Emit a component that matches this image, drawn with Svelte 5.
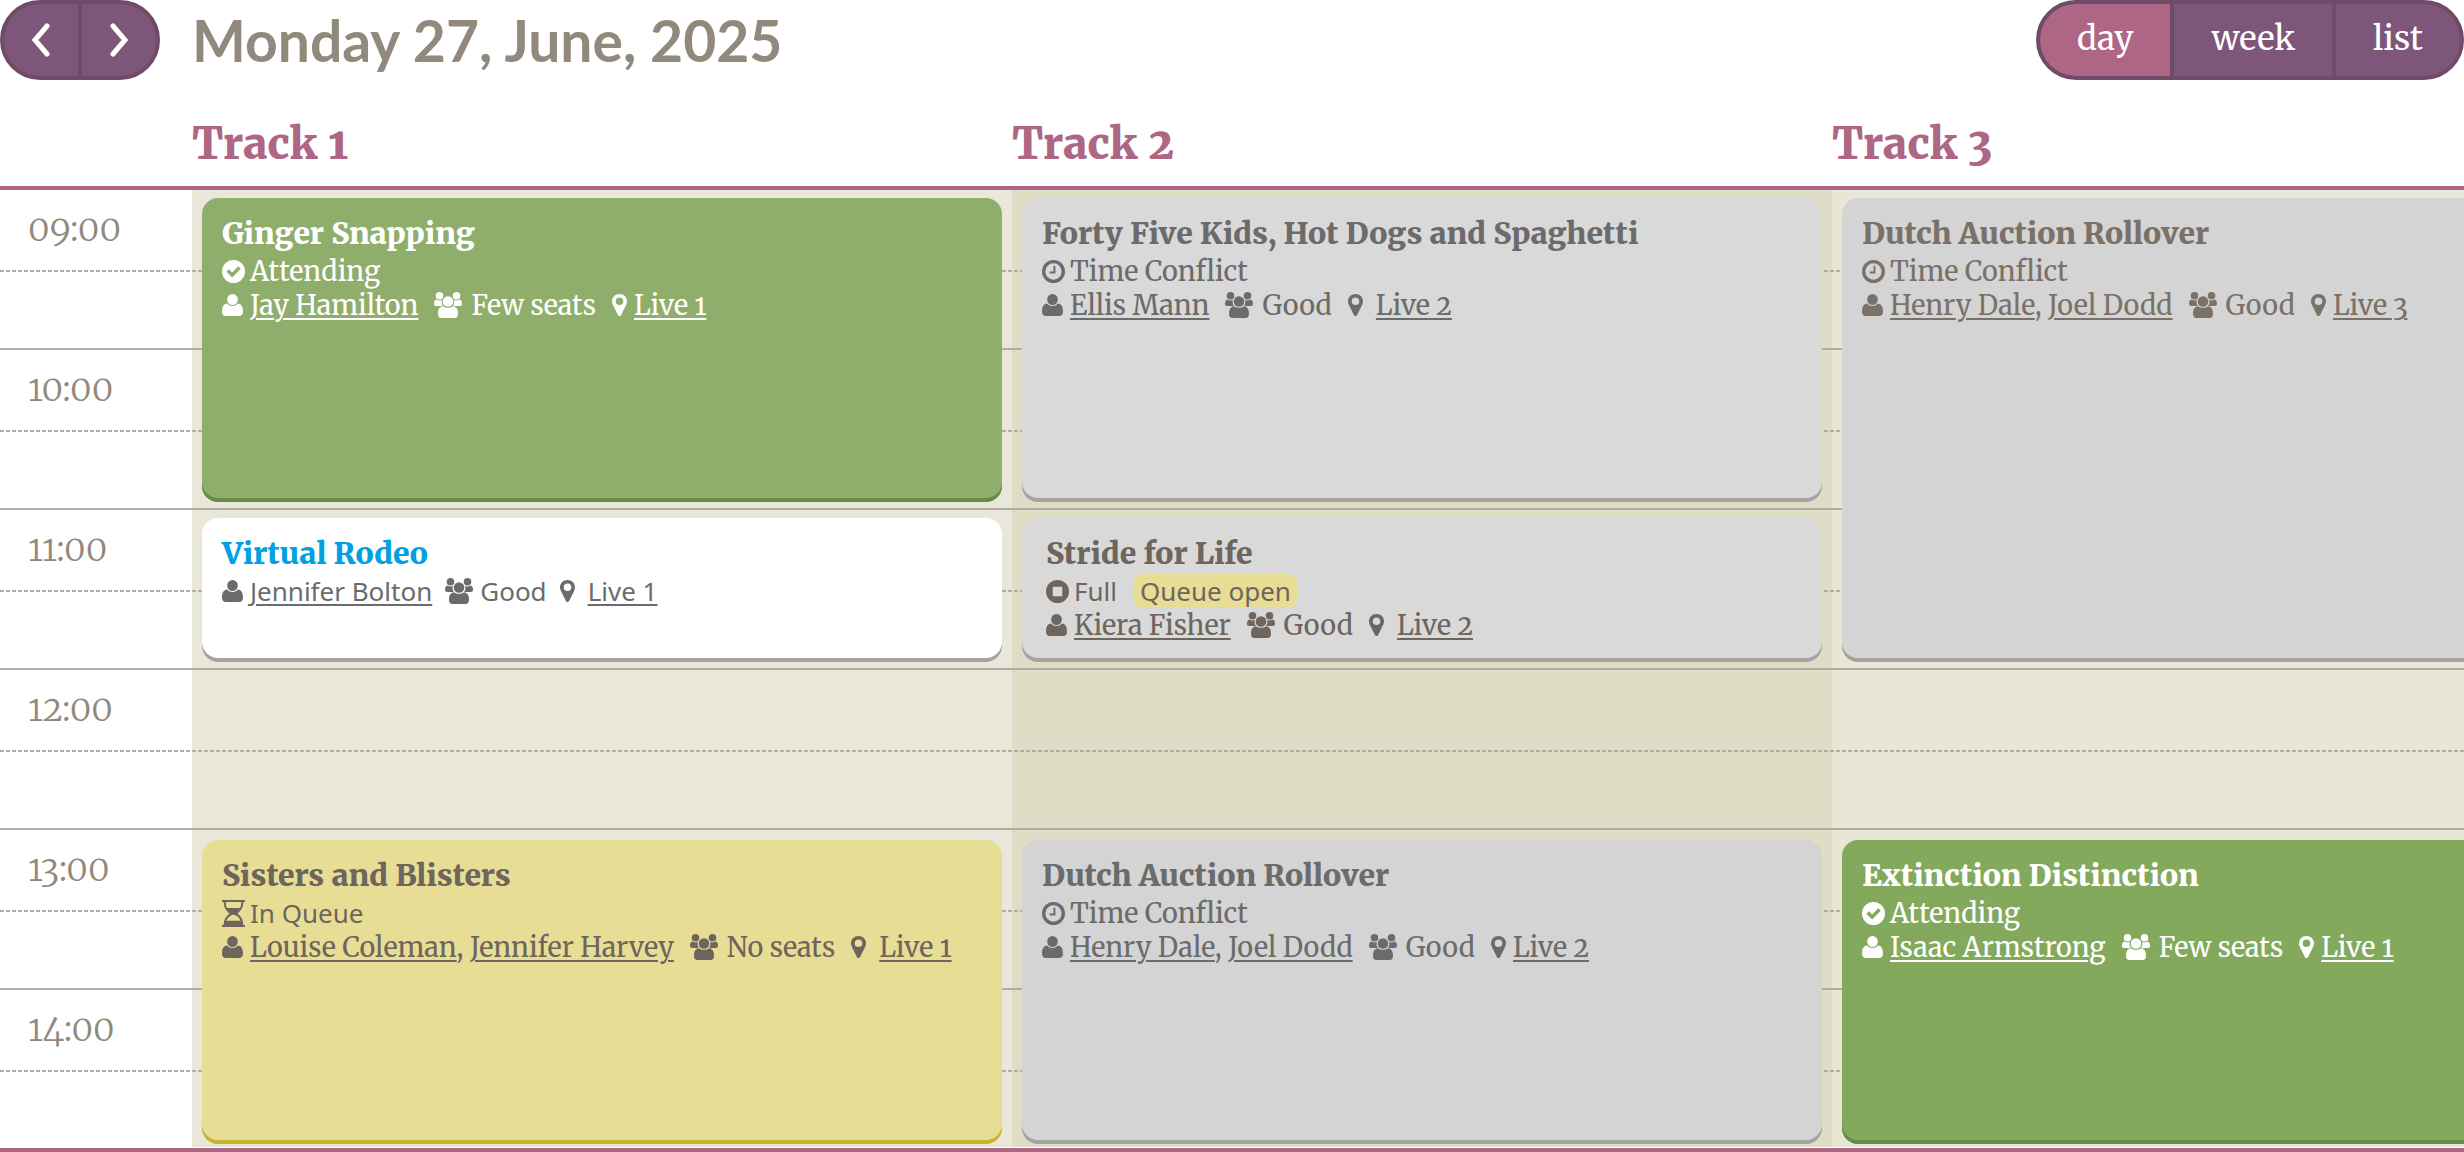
<script lang="ts">
  type Person = string;
  interface Session {
    title: string;
    kind: string;
    status?: 'attending' | 'conflict' | 'full' | 'queue';
    statusText?: string;
    queueOpen?: boolean;
    people: Person[];
    seats: string;
    room: string;
    roomy?: boolean;
    indent?: boolean;
    sans?: boolean;
    start: number;
    span: number;
  }

  const hours = ['09:00', '10:00', '11:00', '12:00', '13:00', '14:00'];
  const views = ['day', 'week', 'list'];
  let view = $state('day');

  const tracks: { name: string; sessions: Session[] }[] = [
    {
      name: 'Track 1',
      sessions: [
        { title: 'Ginger Snapping', kind: 'going', status: 'attending', statusText: 'Attending', people: ['Jay Hamilton'], seats: 'Few seats', room: 'Live 1', start: 1, span: 2 },
        { title: 'Virtual Rodeo', kind: 'open', sans: true, people: ['Jennifer Bolton'], seats: 'Good', room: 'Live 1', roomy: true, start: 3, span: 1 },
        { title: 'Sisters and Blisters', kind: 'queued', status: 'queue', statusText: 'In Queue', people: ['Louise Coleman', 'Jennifer Harvey'], seats: 'No seats', room: 'Live 1', roomy: true, start: 5, span: 2 }
      ]
    },
    {
      name: 'Track 2',
      sessions: [
        { title: 'Forty Five Kids, Hot Dogs and Spaghetti', kind: 'muted', status: 'conflict', statusText: 'Time Conflict', people: ['Ellis Mann'], seats: 'Good', room: 'Live 2', roomy: true, start: 1, span: 2 },
        { title: 'Stride for Life', kind: 'muted full', status: 'full', statusText: 'Full', queueOpen: true, indent: true, people: ['Kiera Fisher'], seats: 'Good', room: 'Live 2', roomy: true, start: 3, span: 1 },
        { title: 'Dutch Auction Rollover', kind: 'muted dim', status: 'conflict', statusText: 'Time Conflict', people: ['Henry Dale', 'Joel Dodd'], seats: 'Good', room: 'Live 2', start: 5, span: 2 }
      ]
    },
    {
      name: 'Track 3',
      sessions: [
        { title: 'Dutch Auction Rollover', kind: 'muted dim warm', status: 'conflict', statusText: 'Time Conflict', people: ['Henry Dale', 'Joel Dodd'], seats: 'Good', room: 'Live 3', start: 1, span: 3 },
        { title: 'Extinction Distinction', kind: 'going deep', status: 'attending', statusText: 'Attending', people: ['Isaac Armstrong'], seats: 'Few seats', room: 'Live 1', start: 5, span: 2 }
      ]
    }
  ];
</script>

{#snippet statusIcon(s: string)}
  {#if s === 'attending'}
    <svg class="icon state" width="23" height="23" viewBox="0 0 24 24" aria-hidden="true">
      <path fill-rule="evenodd" d="M12 0a12 12 0 1 0 0 24a12 12 0 0 0 0-24zM10.6 18.2L4.6 12.2l2.6-2.6l3.4 3.4l6.4-6.4l2.6 2.6z" />
    </svg>
  {:else if s === 'conflict'}
    <svg class="icon state" width="23" height="23" viewBox="0 0 24 24" aria-hidden="true">
      <path fill-rule="evenodd" d="M12 0a12 12 0 1 0 0 24a12 12 0 0 0 0-24zM12 3.5a8.5 8.5 0 1 1 0 17a8.5 8.5 0 0 1 0-17z" />
      <path d="M12 6h2v8H8v-2h4z" />
    </svg>
  {:else if s === 'full'}
    <svg class="icon state" width="23" height="23" viewBox="0 0 24 24" aria-hidden="true">
      <path fill-rule="evenodd" d="M12 0a12 12 0 1 0 0 24a12 12 0 0 0 0-24zM7.6 7h8.8a.6.6 0 0 1 .6.6v8.8a.6.6 0 0 1-.6.6H7.6a.6.6 0 0 1-.6-.6V7.600a.6.6 0 0 1 .6-.6z" />
    </svg>
  {:else}
    <svg class="icon state" width="23" height="27" viewBox="0 0 23 27" aria-hidden="true">
      <path fill-rule="evenodd" d="M0 0h23v2h-1.700c0 5-2.200 9-6 11.500c3.800 2.500 6 6.500 6 11.500H23v2H0v-2h1.700c0-5 2.200-9 6-11.500C3.900 11 1.700 7 1.700 2H0zM3.700 2c.1 2.500.5 4.500 1.300 6h13c.8-1.500 1.200-3.500 1.300-6zM11.500 14.500c-4 1-6 3.300-7 6.200h14c-1-2.900-3-5.200-7-6.200z" />
    </svg>
  {/if}
{/snippet}

<div class="page">
  <header class="bar">
    <nav class="group" aria-label="Change day">
      <button class="step" aria-label="Previous day">
        <svg width="20" height="34" viewBox="0 0 20 34" aria-hidden="true"><path class="chevron" d="M16 3L4 17l12 14" /></svg>
      </button>
      <button class="step" aria-label="Next day">
        <svg width="20" height="34" viewBox="0 0 20 34" aria-hidden="true"><path class="chevron" d="M4 3l12 14L4 31" /></svg>
      </button>
    </nav>
    <h1>Monday 27, June, 2025</h1>
    <div class="group views" role="group" aria-label="View">
      {#each views as v}
        <button class:active={view === v} aria-pressed={view === v} onclick={() => (view = v)}>{v}</button>
      {/each}
    </div>
  </header>

  <div class="heads">
    {#each tracks as t}
      <h2>{t.name}</h2>
    {/each}
  </div>

  <main class="board">
    {#each hours as h, i}
      <div class="slot" style:grid-row={i + 1}>
        <time>{h}</time>
      </div>
    {/each}
    <div class="tracks">
      {#each tracks as t}
        <section class="track" aria-label={t.name}>
          {#each t.sessions as s}
            <article class="card {s.kind}" class:late={s.start === 5} class:indent={s.indent} style:grid-row="{s.start} / span {s.span}">
              <h3>{s.title}</h3>
              {#if s.status}
                <p class="line" class:sans={s.status === 'full' || s.status === 'queue'}>
                  {@render statusIcon(s.status)}
                  <span>{s.statusText}</span>
                  {#if s.queueOpen}<span class="tag">Queue open</span>{/if}
                </p>
              {/if}
              <p class="line" class:sans={s.sans}>
                <svg class="icon" width="21" height="22" viewBox="0 0 21 22" aria-hidden="true">
                  <ellipse cx="10.500" cy="5.500" rx="5.300" ry="5.500" />
                  <path d="M5 9.500c1.500 1.700 3.300 2.500 5.500 2.500s4-.8 5.500-2.500c3.500.4 5 3.500 5 8c0 3-1.500 4.500-4 4.500H4c-2.500 0-4-1.500-4-4.500c0-4.500 1.500-7.600 5-8z" />
                </svg>
                <span>{#each s.people as p, i}{#if i > 0}{', '}{/if}<a href="#speaker">{p}</a>{/each}</span>
                <svg class="icon crowd" width="28" height="26" viewBox="0 0 28 26" aria-hidden="true">
                  <circle cx="5.500" cy="3.800" r="3.800" />
                  <circle cx="22.500" cy="3.800" r="3.800" />
                  <path d="M2.500 7.500c2 1.200 4 1.200 5.400.3c-.8 2.700-.1 4.700 1 6.200H2.500C.8 14 0 13.200 0 12c0-2.500.7-4.300 2.500-4.500z" />
                  <path d="M25.500 7.500c-2 1.200-4 1.200-5.400.3c.8 2.700.1 4.700-1 6.200h6.400c1.700 0 2.500-.8 2.500-2c0-2.500-.7-4.300-2.500-4.500z" />
                  <circle cx="14" cy="9.500" r="5.300" />
                  <path d="M9 14.300c3 2 7 2 10 0c3.500.5 5 3.200 5 7.200c0 3-1.200 4.500-3.500 4.500h-13C5.200 26 4 24.500 4 21.500c0-4 1.500-6.700 5-7.200z" />
                </svg>
                <span>{s.seats}</span>
                <svg class="icon pin" width="15" height="22" viewBox="0 0 15 22" aria-hidden="true">
                  <path fill-rule="evenodd" d="M7.500 0C3.200 0 0 3.200 0 7.300c0 1.300.2 2.300.7 3.300L6 21.200c.6 1.100 2.400 1.100 3 0l5.300-10.600c.5-1 .7-2 .7-3.300C15 3.200 11.800 0 7.500 0zM7.500 3.500a3.800 3.800 0 1 1 0 7.600a3.800 3.800 0 0 1 0-7.600z" />
                </svg>
                <a class:roomy={s.roomy} href="#room">{s.room}</a>
              </p>
            </article>
          {/each}
        </section>
      {/each}
    </div>
  </main>
</div>

<style>
  :global(body) {
    background: #fff;
  }
  .page {
    --serif: 'Merriweather', 'DejaVu Serif Condensed', 'DejaVu Serif', serif;
    --sans: 'Noto Sans', 'Open Sans', sans-serif;
    --gutter: 192px;
    --track: 36.09%;
    overflow-x: hidden;
    font-family: var(--serif);
    font-variant-numeric: oldstyle-nums;
    color: #6b6b6b;
  }
  h1, h2, h3, p {
    margin: 0;
  }

  .bar {
    display: flex;
    align-items: center;
    gap: 32px;
    height: 80px;
  }
  .group {
    display: flex;
    box-sizing: border-box;
    height: 80px;
    border: 4px solid #6e4c68;
    border-radius: 40px;
    background: #6e4c68;
    overflow: hidden;
    gap: 4px;
  }
  .group button {
    border: 0;
    padding: 0;
    margin: 0;
    background: #7d5679;
    color: #fff;
    font: 33px/70px var(--serif);
    cursor: pointer;
  }
  .group .step {
    display: flex;
    align-items: center;
    justify-content: center;
    width: 74px;
  }
  .chevron {
    fill: none;
    stroke: #fff;
    stroke-width: 5;
    stroke-linecap: round;
    stroke-linejoin: miter;
  }
  .views {
    margin-left: auto;
  }
  .group.views button {
    padding: 0 37px 2px;
  }
  .group.views button.active {
    background: #ad6684;
  }
  h1 {
    font: bold 57px/80px Lato, sans-serif;
    color: #92897d;
  }

  .heads {
    display: grid;
    grid-auto-flow: column;
    grid-auto-columns: var(--track);
    padding-left: var(--gutter);
    padding-top: 36px;
    border-bottom: 4px solid #ad6684;
  }
  h2 {
    font-size: 43px;
    font-weight: 900;
    line-height: 56px;
    padding-bottom: 14px;
    color: #ad6684;
  }

  .board {
    display: grid;
    grid-template-columns: var(--gutter) minmax(0, 1fr);
    grid-template-rows: repeat(5, minmax(160px, auto)) minmax(157px, auto);
    padding-bottom: 1px;
    border-bottom: 4px solid #ad6684;
  }
  .slot {
    grid-column: 1 / -1;
    display: grid;
    grid-template-rows: 80px 1fr;
    z-index: 1;
    pointer-events: none;
    border-bottom: 2px solid #b3aca3;
  }
  .slot:nth-child(6) {
    border-bottom: 0;
  }
  .slot::after {
    content: '';
    height: 2px;
    background: repeating-linear-gradient(90deg, #b3aca3 0 4px, transparent 4px 6px);
  }
  .slot time {
    padding-left: 28px;
    font-size: 35px;
    font-weight: 300;
    line-height: 78px;
    color: #92897d;
  }
  .tracks {
    grid-column: 2;
    grid-row: 1 / -1;
    display: grid;
    grid-auto-flow: column;
    grid-auto-columns: var(--track);
    grid-template-rows: subgrid;
    overflow: hidden;
  }
  .track {
    grid-row: 1 / -1;
    display: grid;
    grid-template-rows: subgrid;
    background: #e8e7d9;
  }
  .track:nth-child(2) {
    background: #dfddc5;
  }
  .track:nth-child(3) {
    background: #e8e7d6;
  }

  .card {
    z-index: 2;
    margin: 8px 10px;
    padding: 17px 20px;
    border-radius: 16px;
  }
  .late {
    margin: 10px 10px 3px;
  }
  .indent {
    padding-left: 24px;
  }
  .going {
    background: #8fae6b;
    color: #fff;
    box-shadow: inset 0 -4px #6a8848;
  }
  .deep {
    background: #83a95d;
  }
  .open {
    background: #fff;
    box-shadow: inset 0 -4px #a3a3a3;
  }
  .open h3 {
    color: #00a0e3;
  }
  .queued {
    background: #e8dd95;
    color: #6d655e;
    box-shadow: inset 0 -4px #c9b22f;
  }
  .muted {
    background: #d9d9d9;
    box-shadow: inset 0 -4px #a3a3a3;
  }
  .full {
    color: #6d655e;
  }
  .dim {
    background: #d4d4d4;
  }
  .warm {
    color: #7a7169;
  }
  h3 {
    margin-bottom: 3px;
    font-size: 30px;
    font-weight: 900;
    line-height: 36px;
  }
  .line {
    display: flex;
    align-items: center;
    font-size: 27px;
    line-height: 34px;
    white-space: nowrap;
  }
  .sans {
    font-family: var(--sans);
    font-size: 26px;
    font-variant-numeric: normal;
  }
  .line a {
    color: inherit;
    text-decoration-thickness: 2px;
    text-underline-offset: 3px;
  }
  .icon {
    flex: none;
    fill: currentColor;
    margin-right: 7px;
  }
  .state {
    margin-right: 5px;
  }
  .crowd, .pin {
    margin-left: 16px;
  }
  .crowd {
    margin-right: 9px;
  }
  .roomy {
    margin-left: 6px;
  }
  .sans .crowd, .sans .pin {
    margin-left: 13px;
  }
  .sans .crowd {
    margin-right: 7px;
  }
  .tag {
    margin-left: 16px;
    padding: 0 7px;
    border-radius: 10px;
    background: #e8dd95;
  }
</style>
